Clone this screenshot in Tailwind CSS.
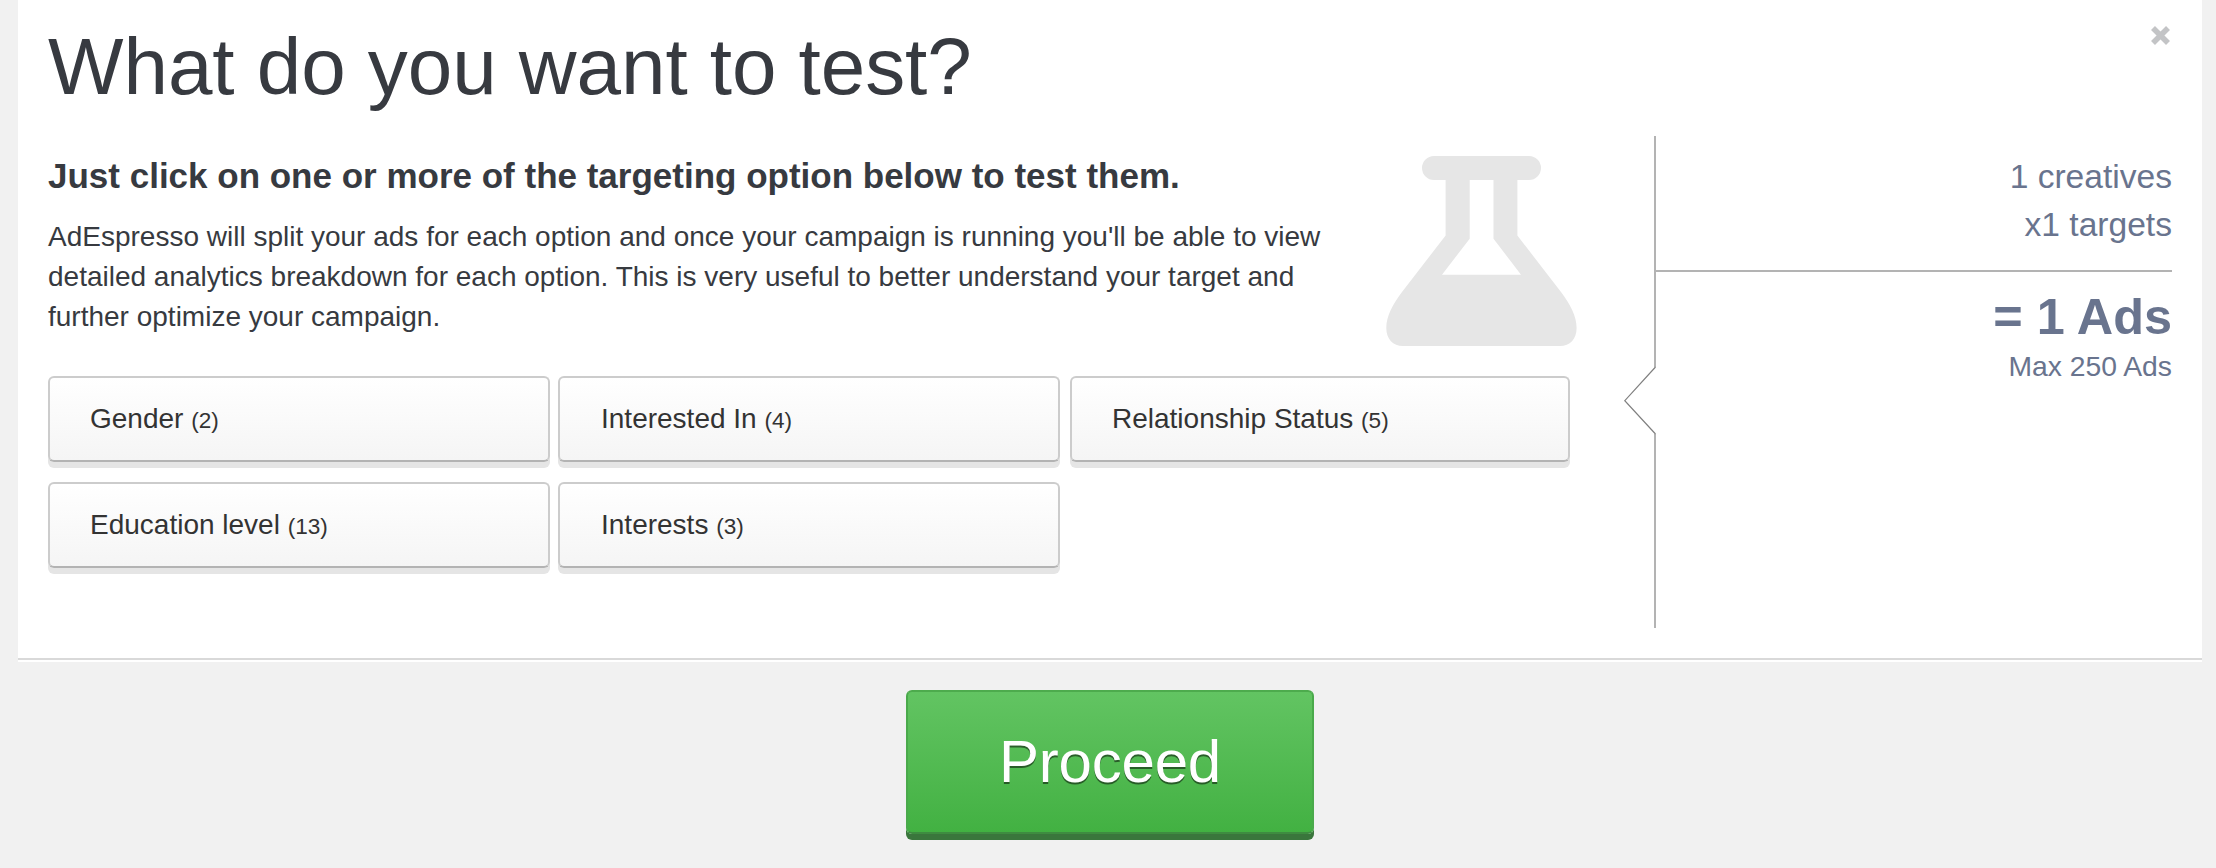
<!DOCTYPE html>
<html lang="en">
<head>
<meta charset="utf-8">
<title>What do you want to test?</title>
<script src="https://cdn.jsdelivr.net/npm/@tailwindcss/browser@4"></script>
</head>
<body class="h-[868px] overflow-hidden bg-[#f1f1f1] font-['Liberation_Sans',Arial,sans-serif] text-[#373a40]">
<main class="relative ml-[18px] flex h-[662px] w-[2184px] border-b-2 border-white bg-white">
  <div class="flex h-[660px] w-full border-b-2 border-[#d9d9d9] pr-[30px] pl-[30px]">
    <section class="w-[1577px] shrink-0 pt-[27px]">
      <h1 class="h-20 text-[80px] leading-[80px] tracking-[-0.05px] whitespace-nowrap">What do you want to test?</h1>
      <div class="mt-[49px] flex">
        <div class="w-[1338px] shrink-0">
          <h2 class="text-[35px] leading-10 font-bold whitespace-nowrap">Just click on one or more of the targeting option below to test them.</h2>
          <p class="mt-[21px] text-[28px] leading-10 whitespace-nowrap">AdEspresso will split your ads for each option and once your campaign is running you'll be able to view<br>detailed analytics breakdown for each option. This is very useful to better understand your target and<br>further optimize your campaign.</p>
        </div>
        <svg class="h-[190px] w-[191px] shrink-0" viewBox="0 0 191 190" fill="#e6e6e6" fill-rule="evenodd" aria-hidden="true">
          <path d="M48 0H143A12 12 0 0 1 143 24H131.4V79.5L175 136C184 148 190.6 160 190.6 172C190.6 183 184 190 174 190H17C7 190 .3 183 .3 172C.3 160 7 148 16 136L59.6 79.5V24H48A12 12 0 0 1 48 0ZM83.7 24V82.7L56 118.7H135L107.5 82.7V24Z"/>
        </svg>
      </div>
      <div class="mt-[30px] grid w-[1522px] grid-cols-[502px_502px_502px] gap-x-2 gap-y-5 text-[28px] text-[#333]">
        <button class="flex h-[86px] items-center rounded-md border-2 border-[#ccc] border-b-[#b3b3b3] bg-linear-to-b from-white to-[#f5f5f5] pb-px pl-10 shadow-[0_6px_0_#e5e5e5]"><span>Gender <small class="text-[22.6px]">(2)</small></span></button>
        <button class="flex h-[86px] items-center rounded-md border-2 border-[#ccc] border-b-[#b3b3b3] bg-linear-to-b from-white to-[#f5f5f5] pb-px pl-[41px] shadow-[0_6px_0_#e5e5e5]"><span>Interested In <small class="text-[22.6px]">(4)</small></span></button>
        <button class="ml-[2px] flex h-[86px] items-center rounded-md border-2 border-[#ccc] border-b-[#b3b3b3] bg-linear-to-b from-white to-[#f5f5f5] pb-px pl-10 shadow-[0_6px_0_#e5e5e5]"><span>Relationship Status <small class="text-[22.6px]">(5)</small></span></button>
        <button class="flex h-[86px] items-center rounded-md border-2 border-[#ccc] border-b-[#b3b3b3] bg-linear-to-b from-white to-[#f5f5f5] pb-px pl-10 shadow-[0_6px_0_#e5e5e5]"><span>Education level <small class="text-[22.6px]">(13)</small></span></button>
        <button class="flex h-[86px] items-center rounded-md border-2 border-[#ccc] border-b-[#b3b3b3] bg-linear-to-b from-white to-[#f5f5f5] pb-px pl-[41px] shadow-[0_6px_0_#e5e5e5]"><span>Interests <small class="text-[22.6px]">(3)</small></span></button>
      </div>
    </section>
    <svg class="mt-[136px] h-[492px] w-[31px] shrink-0 overflow-visible" viewBox="0 0 31 492" fill="none" aria-hidden="true">
      <path d="M30 0V231M30 298V492" stroke="#b3b3b3" stroke-width="2"/>
      <path d="M30.5 231L-.2 264.7L30.5 298" stroke="#808080" stroke-width="1.2"/>
    </svg>
    <aside class="mt-[136px] h-[492px] grow text-right text-[#69748e]">
      <div class="h-[136px] border-b-2 border-[#b3b3b3] pt-[17px] text-[33.6px] leading-[48px]">
        <p>1 creatives</p>
        <p>x1 targets</p>
      </div>
      <p class="mt-[15px] text-[50.4px] leading-[60px] font-bold">= 1 Ads</p>
      <p class="-mt-px text-[28.3px] leading-10">Max 250 Ads</p>
    </aside>
  </div>
  <button class="absolute top-[26px] right-[32px] size-[19px]" aria-label="Close">
    <svg class="size-full" viewBox="0 0 19 19" fill="none" stroke="#c3c4c6" stroke-width="5.6" aria-hidden="true"><path d="M2 2L17 17M17 2L2 17"/></svg>
  </button>
</main>
<div class="mt-7 ml-[906px]">
  <button class="flex h-[144px] w-[408px] items-center justify-center rounded-md border-2 border-[#4dab4d] border-x-[#4aaa4b] border-b-[#3e8c40] bg-linear-to-b from-[#62c462] to-[#42b142] text-[60px] tracking-[-0.2px] text-white shadow-[0_6px_0_#3a763c] text-shadow-[0_2px_0_rgb(0_0_0/0.5)]">Proceed</button>
</div>
</body>
</html>
